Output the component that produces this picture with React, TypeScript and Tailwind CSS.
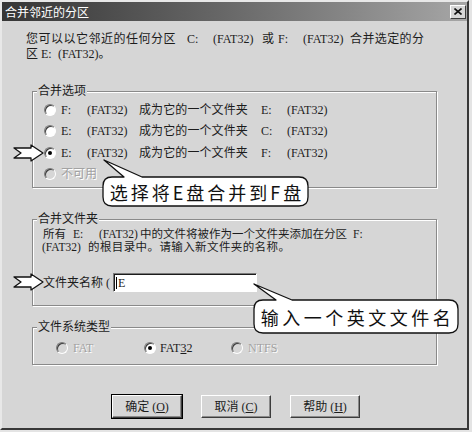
import React from 'react';

const Radio = ({ checked = false, disabled = false }: { checked?: boolean; disabled?: boolean }) => (
  <span
    className={`flex h-[12px] w-[12px] shrink-0 items-center justify-center rounded-full border border-t-[#7a7a7a] border-l-[#7a7a7a] border-r-white border-b-white shadow-[inset_1px_1px_0_#3c3c3c] ${
      disabled ? 'bg-[#d6d6d6]' : 'bg-white'
    }`}
  >
    {checked && <span className="h-[4px] w-[4px] rounded-full bg-black" />}
  </span>
);

const Btn = ({ label, k, primary = false }: { label: string; k: string; primary?: boolean }) => (
  <button
    className={`flex h-[23px] w-[70px] items-center justify-center border border-t-white border-l-white border-r-[#3c3c3c] border-b-[#3c3c3c] bg-[#d6d6d6] text-[12px] text-[#1c1c1c] shadow-[inset_-1px_-1px_0_#8a8a8a] ${
      primary ? 'outline outline-black' : ''
    }`}
  >
    {label}&nbsp;(<span className="underline">{k}</span>)
  </button>
);

export default function App() {
  return (
    <div className="relative h-[432px] w-[472px] overflow-hidden bg-[#e4e4e4] font-['Liberation_Serif','Noto_Sans_CJK_SC',serif] text-[12px] text-[#1c1c1c]">
      <div className="flex h-[430px] w-[469px] flex-col border-2 border-t-[#e8e8e8] border-l-[#e8e8e8] border-r-[#383838] border-b-[#383838] bg-[#d6d6d6]">
        {/* title bar */}
        <div className="flex h-[19px] shrink-0 items-center justify-between bg-linear-to-r from-[#363636] via-[#6a6a6a] to-[#a6a6a6] pl-[3px] pr-[1px]">
          <span className="font-['Noto_Sans_CJK_SC',sans-serif] text-[12px] leading-none text-white">合并邻近的分区</span>
          <span className="flex h-[14px] w-[16px] items-center justify-center border border-t-white border-l-white border-r-[#3c3c3c] border-b-[#3c3c3c] bg-[#d6d6d6]">
            <svg width="8" height="7" viewBox="0 0 8 7">
              <path d="M0.5 0.5 L7.5 6.5 M7.5 0.5 L0.5 6.5" stroke="#111" strokeWidth="1.6" />
            </svg>
          </span>
        </div>

        <div className="flex flex-col pl-[24px] pt-[10px]">
          {/* intro */}
          <div className="flex h-[15px] items-center whitespace-nowrap">
            <span className="w-[161px] tracking-[0.5px]">您可以以它邻近的任何分区</span>
            <span className="w-[26px]">C:</span>
            <span className="w-[49px]">(FAT32)</span>
            <span className="w-[16px]">或</span>
            <span className="w-[25px]">F:</span>
            <span className="w-[47px]">(FAT32)</span>
            <span className="tracking-[0.4px]">合并选定的分</span>
          </div>
          <div className="flex h-[15px] items-center whitespace-nowrap">
            <span className="w-[15px]">区</span>
            <span className="w-[17px]">E:</span>
            <span>(FAT32)。</span>
          </div>

          {/* 合并选项 */}
          <fieldset className="ml-[6px] mt-[23px] w-[405px] border border-[#8a8a8a] pb-[2px] shadow-[inset_1px_1px_0_#fff,1px_1px_0_#fff]">
            <legend className="ml-[4px] bg-[#d6d6d6] px-[1px] leading-[15px]">合并选项</legend>
            {[
              ['F:', 'E:', false],
              ['E:', 'C:', false],
              ['E:', 'F:', true],
            ].map(([a, b, on], i) => (
              <div key={i} className="flex h-[21.5px] items-center whitespace-nowrap pl-[11px]">
                <Radio checked={on as boolean} />
                <span className="ml-[5px] w-[26px]">{a as string}</span>
                <span className="w-[52px]">(FAT32)</span>
                <span className="w-[122px] tracking-[0.1px]">成为它的一个文件夹</span>
                <span className="w-[26px]">{b as string}</span>
                <span>(FAT32)</span>
              </div>
            ))}
            <div className="flex h-[21.5px] items-center pl-[11px]">
              <Radio disabled />
              <span className="ml-[5px] text-[#a2a2a2] [text-shadow:1px_1px_0_#fff]">不可用</span>
            </div>
          </fieldset>

          {/* 合并文件夹 */}
          <fieldset className="ml-[6px] mt-[24px] w-[405px] border border-[#8a8a8a] pb-[13px] shadow-[inset_1px_1px_0_#fff,1px_1px_0_#fff]">
            <legend className="ml-[4px] bg-[#d6d6d6] px-[1px] leading-[15px]">合并文件夹</legend>
            <div className="pt-[1px] text-[11.5px] leading-[13px]">
              <div className="flex whitespace-nowrap pl-[10px]">
                <span className="w-[24px]">所有</span>
                <span className="w-[32px] pl-[6px]">E:</span>
                <span className="w-[41px]">(FAT32)</span>
                <span>中的文件将被作为一个文件夹添加在分区</span>
                <span className="pl-[6px]">F:</span>
              </div>
              <div className="flex whitespace-nowrap pl-[9px]">
                <span className="w-[46px]">(FAT32)</span>
                <span className="tracking-[0.4px]">的根目录中。请输入新文件夹的名称。</span>
              </div>
            </div>
            <div className="mt-[19px] flex h-[19px] items-center pl-[10px]">
              <span className="w-[70px] whitespace-nowrap">文件夹名称 (</span>
              <div className="flex h-[19px] w-[144px] items-center border border-t-[#7a7a7a] border-l-[#7a7a7a] border-r-white border-b-white bg-white pl-[2px] shadow-[inset_1px_1px_0_#1c1c1c]">
                <span className="h-[12px] border-l border-black" />
                <span className="pl-[1px]">E</span>
              </div>
            </div>
          </fieldset>

          {/* 文件系统类型 */}
          <fieldset className="ml-[6px] mt-[14px] w-[405px] border border-[#8a8a8a] pb-[3px] shadow-[inset_1px_1px_0_#fff,1px_1px_0_#fff]">
            <legend className="ml-[4px] bg-[#d6d6d6] px-[1px] leading-[15px]">文件系统类型</legend>
            <div className="flex h-[26px] items-center pl-[23px]">
              <Radio disabled />
              <span className="ml-[5px] w-[71px] text-[#a2a2a2] [text-shadow:1px_1px_0_#fff]">FAT</span>
              <Radio checked />
              <span className="ml-[4px] w-[71px]">
                FAT<span className="underline">3</span>2
              </span>
              <Radio disabled />
              <span className="ml-[5px] text-[#a2a2a2] [text-shadow:1px_1px_0_#fff]">NTFS</span>
            </div>
          </fieldset>

          {/* buttons */}
          <div className="ml-[86px] mt-[30px] flex gap-[19px]">
            <Btn label="确定" k="O" primary />
            <Btn label="取消" k="C" />
            <Btn label="帮助" k="H" />
          </div>
        </div>
      </div>

      {/* annotations */}
      <svg className="pointer-events-none absolute left-0 top-0" width="472" height="432" viewBox="0 0 472 432">
        <g fill="#fff" stroke="#111" strokeWidth="1.3" strokeLinejoin="round">
          <path d="M14 148 H31 V145 L43 153 L31 161 V158 H14 L21 153 Z" />
          <path d="M14 277 H31 V274 L43 282 L31 290 V287 H14 L21 282 Z" />
          <path d="M112 177 H124 L104 160 L142 177 H299 Q308 177 308 186 V197 Q308 206 299 206 H112 Q103 206 103 197 V186 Q103 177 112 177 Z" />
          <path d="M263 300 H276 L254 284 L292 300 H449 Q458 300 458 309 V324 Q458 333 449 333 H263 Q254 333 254 324 V309 Q254 300 263 300 Z" />
        </g>
      </svg>
      <div className="absolute left-[103px] top-[177px] flex h-[29px] w-[205px] items-center justify-center pl-[3px] font-['Noto_Sans_CJK_SC',sans-serif] text-[18px] leading-none tracking-[3px] text-[#111]">
        选择将E盘合并到F盘
      </div>
      <div className="absolute left-[254px] top-[300px] flex h-[33px] w-[204px] items-center justify-center pl-[3px] font-['Noto_Sans_CJK_SC',sans-serif] text-[18px] leading-none tracking-[3.5px] text-[#111]">
        输入一个英文文件名
      </div>
    </div>
  );
}
